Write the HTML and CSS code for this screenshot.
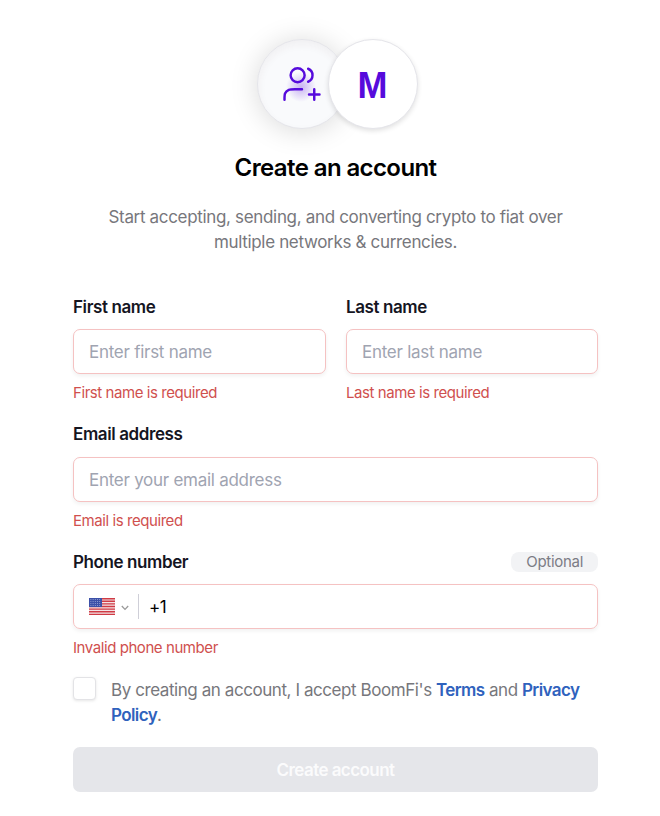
FILE: index.html
```html
<!DOCTYPE html>
<html lang="en">
<head>
  <meta charset="utf-8">
  <title>Create an account</title>
  <link rel="stylesheet" href="styles.css">
</head>
<body>
  <main class="signup">
    <div class="avatars">
      <div class="circle circle-icon">
        <svg width="42" height="42" viewBox="0 0 24 24" fill="none" stroke="#560bdc" stroke-width="1.4" stroke-linecap="round" stroke-linejoin="round">
          <path d="M19 21v-6M16 18h6M12 15H8c-1.86 0-2.8 0-3.53.3a4 4 0 0 0-2.17 2.17C2 18.2 2 19.14 2 21M15.5 3.29a4 4 0 0 1 0 7.42"/>
          <circle cx="9.5" cy="7" r="4"/>
        </svg>
      </div>
      <div class="circle circle-letter">M</div>
    </div>

    <h1>Create an account</h1>
    <p class="intro">Start accepting, sending, and converting crypto to fiat over<br>multiple networks &amp; currencies.</p>

    <form>
      <div class="row">
        <div class="field">
          <label for="first">First name</label>
          <input type="text" id="first" placeholder="Enter first name">
          <div class="error">First name is required</div>
        </div>
        <div class="field">
          <label for="last">Last name</label>
          <input type="text" id="last" placeholder="Enter last name">
          <div class="error">Last name is required</div>
        </div>
      </div>

      <div class="field">
        <label for="email">Email address</label>
        <input type="text" id="email" placeholder="Enter your email address">
        <div class="error">Email is required</div>
      </div>

      <div class="field">
        <label for="phone">Phone number <span class="badge">Optional</span></label>
        <div class="phone">
          <svg class="flag" width="26" height="17" viewBox="0 0 26 17">
            <rect width="26" height="17" fill="#f3e4e6"/>
            <path d="M0 .65h26M0 3.27h26M0 5.89h26M0 8.5h26M0 11.12h26M0 13.74h26M0 16.35h26" stroke="#d03b45" stroke-width="1.45"/>
            <rect width="13" height="9" fill="#3c50a8"/>
            <path d="M1.5 1.5h11M1.5 3.5h11M1.5 5.5h11M1.5 7.5h11" stroke="#b9c3e6" stroke-width=".8" stroke-dasharray=".8 1.4"/>
          </svg>
          <svg class="arrow" width="8" height="6" viewBox="0 0 8 6" fill="none" stroke="#9a9a9a" stroke-width="1.3">
            <path d="M.8 1 4 4.4 7.2 1"/>
          </svg>
          <input type="text" id="phone" value="+1">
        </div>
        <div class="error">Invalid phone number</div>
      </div>

      <div class="terms">
        <input type="checkbox" id="accept">
        <p>By creating an account, I accept BoomFi's <a href="#">Terms</a> and <a href="#">Privacy<br>Policy</a>.</p>
      </div>

      <button type="submit" disabled>Create account</button>
    </form>
  </main>
</body>
</html>
```
FILE: styles.css
```css
* { box-sizing: border-box; }
body { margin: 0; background: #fff; font-family: Inter, "Liberation Sans", sans-serif; font-size: 17px; line-height: 25px; color: #77777c; }
.signup { width: 525px; margin: 39px 0 0 73px; }

.avatars { display: flex; justify-content: center; padding-left: 3px; }
.circle { width: 90px; height: 90px; border-radius: 50%; border: 1px solid #e5e5ea; display: flex; align-items: center; justify-content: center; }
.circle-icon { background: radial-gradient(circle 15px at 43px 47px, rgba(86,11,220,0.3), rgba(86,11,220,0)) #f9fafc; box-shadow: 0 2px 28px rgba(0,0,0,0.15), inset 0 4px 8px rgba(70,40,30,0.05); }
.circle-letter { position: relative; margin-left: -19px; background: #fff; color: #560bdc; font: bold 36px "Liberation Sans", Arial, sans-serif; padding-top: 3px; box-shadow: 0 2px 5px rgba(0,0,0,0.12); }

h1 { margin: 23px 0 0; font-size: 24px; line-height: 32px; font-weight: 600; letter-spacing: -0.6px; color: #000; text-align: center; }
.intro { margin: 21px 0 0; text-align: center; letter-spacing: -0.33px; }

form { margin-top: 39px; }
.row { display: grid; grid-template-columns: 253px 252px; gap: 20px; }
.field { margin-bottom: 17.5px; }
.row .field { min-width: 0; }
label { display: flex; justify-content: space-between; align-items: center; height: 25px; padding-top: 1px; margin-bottom: 10px; color: #15151f; font-weight: 600; letter-spacing: -0.4px; }
.badge { background: #f2f3f5; color: #7c7c85; font-size: 15px; font-weight: 400; line-height: 20px; height: 20px; margin-top: -1px; padding: 0 15px; border-radius: 8px; letter-spacing: -0.3px; }

input[type=text] { display: block; width: 100%; height: 45px; padding: 1px 15px 0; border: 1px solid #f5c2c2; border-radius: 7px; background: #fff; box-shadow: 0 2px 4px rgba(0,0,0,0.06); font-family: inherit; font-size: 17px; letter-spacing: -0.27px; color: #000; outline: none; }
input::placeholder { color: #9fa4b1; opacity: 1; }
.error { margin-top: 7px; font-size: 15px; line-height: 23px; letter-spacing: -0.43px; color: #d0504e; }

.phone { display: flex; align-items: center; height: 45px; padding-left: 15px; border: 1px solid #f5c2c2; border-radius: 7px; box-shadow: 0 2px 4px rgba(0,0,0,0.06); }
.arrow { margin: 2px 9px 0 6px; }
.phone input[type=text] { height: 25px; flex: 1; width: auto; margin-right: 10px; padding: 0 10px; border: 0; border-left: 1px solid #cfcfd8; border-radius: 0; box-shadow: none; letter-spacing: -0.6px; }

.terms { display: flex; gap: 15px; }
.terms input { appearance: none; flex: none; width: 23px; height: 23px; margin: 0; border: 1px solid #e3e3e6; border-radius: 4px; background: #fff; box-shadow: 0 1px 3px rgba(0,0,0,0.1); }
.terms p { margin: 1px 0 0; letter-spacing: -0.43px; white-space: nowrap; }
.terms a { color: #2f62bd; font-weight: 600; letter-spacing: -0.6px; text-decoration: none; }

button { display: block; width: 100%; height: 45px; margin-top: 19px; padding-top: 2px; border: 0; border-radius: 7px; background: #e5e6ea; color: #fbfbfc; font-family: inherit; font-size: 17px; font-weight: 600; letter-spacing: -0.55px; }
```
